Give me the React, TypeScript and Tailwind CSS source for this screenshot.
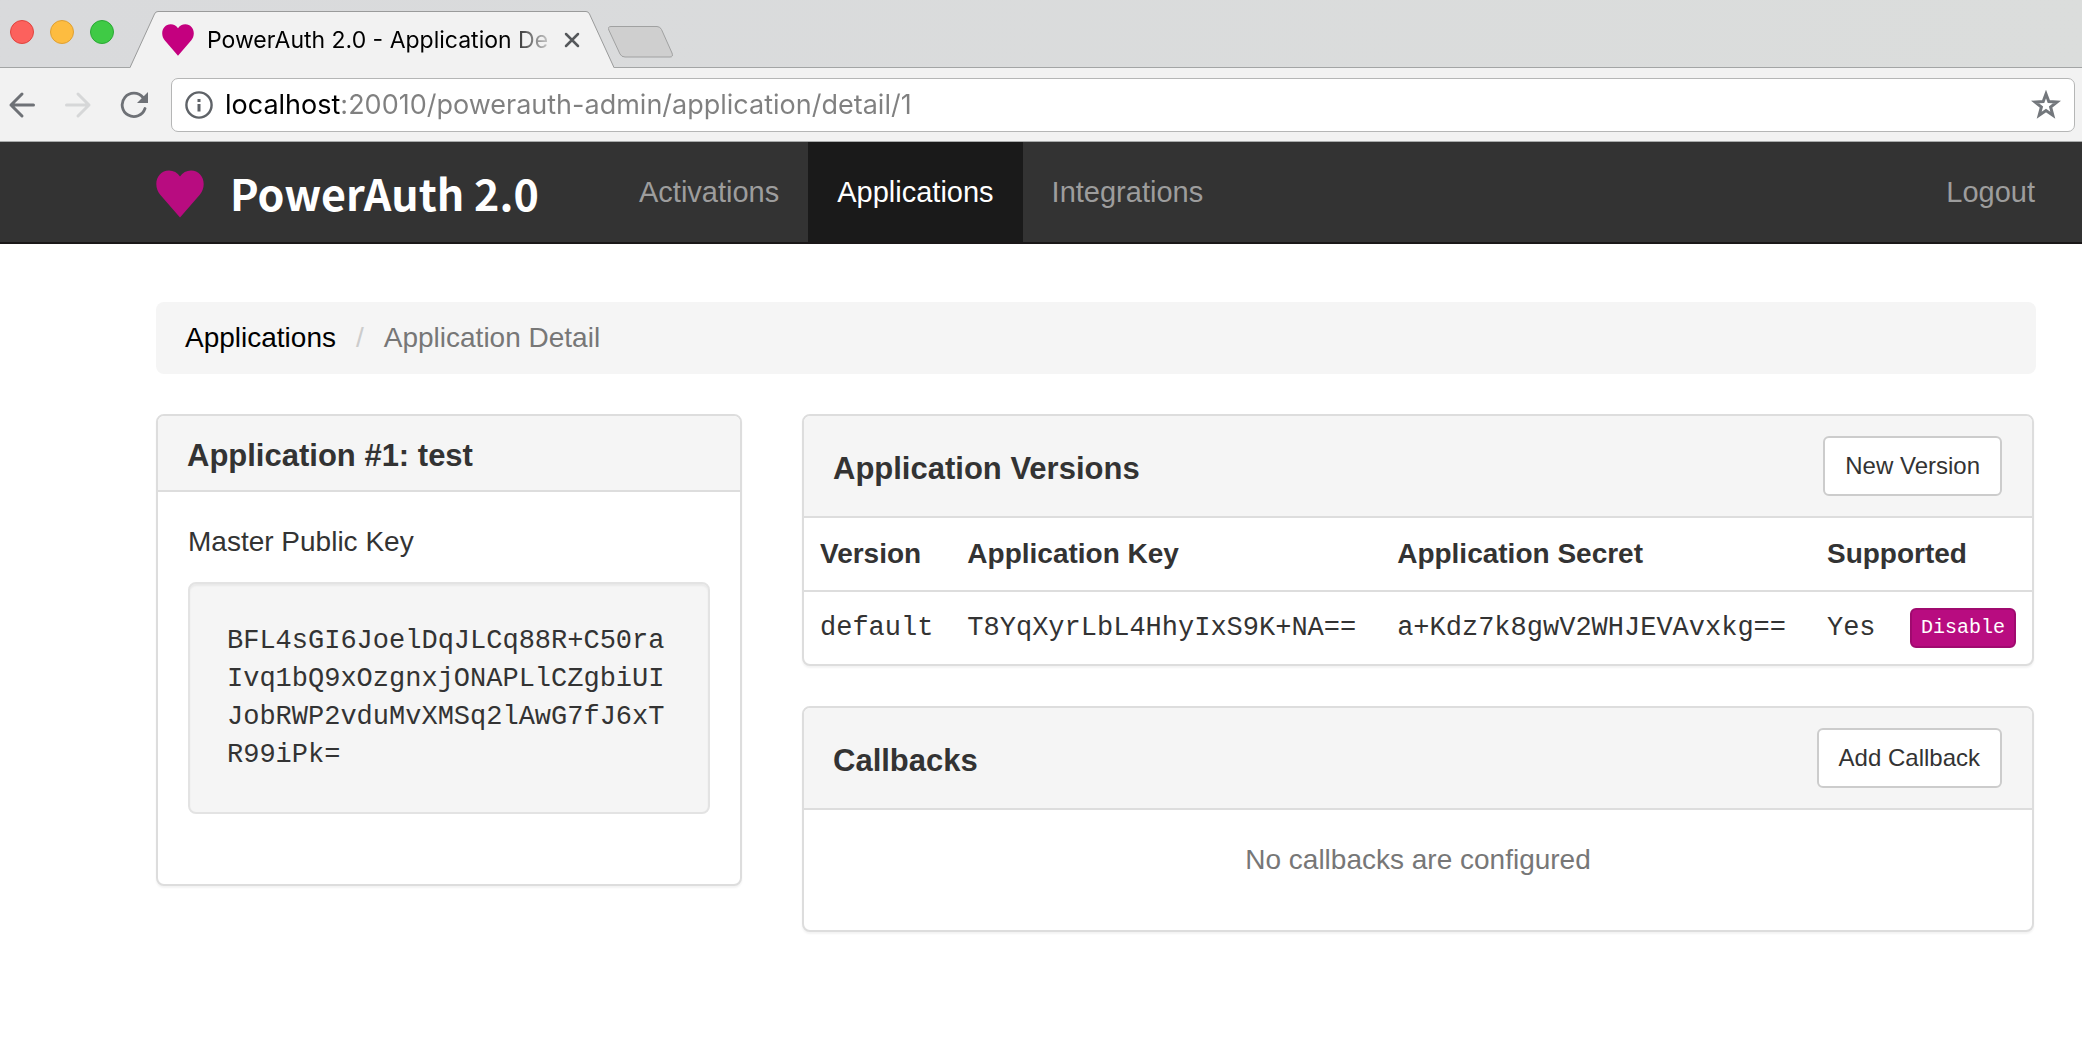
import type { ReactNode } from "react";

function Heart({ className, color }: { className: string; color: string }) {
  return (
    <svg viewBox="0 0 48 48" className={className} aria-hidden="true">
      <path
        d="M24 6.500C21.500 2.500 17.500 .5 13 .5C5.500 .5 .3 6.500 .3 14C.3 18.500 1.800 21.500 4 24.500L24 47.500L44 24.500C46.200 21.500 47.700 18.500 47.700 14C47.700 6.500 42.500 .5 35 .5C30.500 .5 26.500 2.500 24 6.500Z"
        fill={color}
      />
    </svg>
  );
}

function BrowserChrome() {
  return (
    <header className="font-[Inter,sans-serif]">
      <div className="flex h-[68px] items-end border-b border-[#a3a5a5] bg-gradient-to-r from-[#d9dadc] to-[#dbdddc]">
        <div className="flex gap-4 self-center pb-1 pl-[10px]">
          <span className="size-6 rounded-full border border-[#e0443e] bg-[#fc615d]" />
          <span className="size-6 rounded-full border border-[#dea034] bg-[#fdbc40]" />
          <span className="size-6 rounded-full border border-[#2aa935] bg-[#3fca45]" />
        </div>
        <div className="relative -mb-px ml-4 h-[57px] w-[484px]">
          <svg viewBox="0 0 484 57" className="absolute inset-0 size-full" aria-hidden="true">
            <path d="M0 57L24.500 3Q25.500 .5 28 .5H456Q458.500 .5 459.500 3L484 57Z" fill="#f2f2f2" />
            <path d="M0 56.500L24.500 3Q25.500 .5 28 .5H456Q458.500 .5 459.500 3L484 56.500" fill="none" stroke="#9a9b9b" />
          </svg>
          <div className="relative flex h-full items-center pl-8 pr-8">
            <Heart className="size-8 shrink-0" color="#c4007f" />
            <span className="ml-[13px] flex-1 whitespace-nowrap text-[23px] leading-8 text-black [mask-image:linear-gradient(to_right,#000_300px,transparent_350px)]">
              PowerAuth 2.0 - Application De
            </span>
            <button type="button" aria-label="Close tab" className="flex size-5 items-center justify-center">
              <svg viewBox="0 0 16 16" className="size-4" aria-hidden="true">
                <path d="M2 2L14 14M14 2L2 14" stroke="#55585b" strokeWidth="2.500" strokeLinecap="round" />
              </svg>
            </button>
          </div>
        </div>
        <button type="button" aria-label="New tab" className="-ml-1.5 mb-[9px]">
          <svg viewBox="0 0 66 32" className="h-8 w-[66px]" aria-hidden="true">
            <path d="M3 .5H49Q52 .5 53.500 3.500L64 27Q65.500 31 62 31H17Q13.500 31 12 28L.8 4Q-.5 .5 3 .5Z" fill="#cfcfcf" stroke="#a0a1a1" />
          </svg>
        </button>
      </div>
      <div className="flex h-[74px] items-center border-b border-[#a9abab] bg-[#f2f2f2] pr-[7px]">
        <div className="flex w-[171px] items-center gap-7 pl-2">
          <button type="button" aria-label="Back">
            <svg viewBox="0 0 28 28" className="size-7" fill="none" stroke="#6e7176" strokeWidth="3" strokeLinecap="round" strokeLinejoin="round" aria-hidden="true">
              <path d="M25.500 14H3M14 3L3 14L14 25" />
            </svg>
          </button>
          <button type="button" aria-label="Forward">
            <svg viewBox="0 0 28 28" className="size-7" fill="none" stroke="#d6d7d8" strokeWidth="3" strokeLinecap="round" strokeLinejoin="round" aria-hidden="true">
              <path d="M2.500 14H25M14 3L25 14L14 25" />
            </svg>
          </button>
          <button type="button" aria-label="Reload">
            <svg viewBox="0 0 28 28" className="size-7" fill="none" aria-hidden="true">
              <path d="M23 6.500A11.700 11.700 0 1 0 25 17.500" stroke="#6e7176" strokeWidth="2.800" strokeLinecap="round" />
              <path d="M28 1V12H17Z" fill="#6e7176" />
            </svg>
          </button>
        </div>
        <div className="flex h-[54px] flex-1 items-center rounded-[7px] border border-[#b5b6b6] bg-white px-[13px]">
          <svg viewBox="0 0 28 28" className="size-7 shrink-0" aria-hidden="true">
            <circle cx="14" cy="14" r="12.600" fill="none" stroke="#5f6368" strokeWidth="2.400" />
            <path d="M12.500 8H15.500V11H12.500ZM12.500 13H15.500V20.500H12.500Z" fill="#5f6368" />
          </svg>
          <input
            type="text"
            aria-label="Address"
            defaultValue="localhost:20010/powerauth-admin/application/detail/1"
            className="ml-3 min-w-0 flex-1 bg-[linear-gradient(to_right,#000_116px,#808080_116px)] bg-clip-text text-[27px] leading-10 text-transparent outline-none"
          />
          <button type="button" aria-label="Bookmark this page">
            <svg viewBox="0 0 30 30" className="size-[30px]" aria-hidden="true">
              <path d="M15 4L17.800 11.600L26 12L19.600 17L21.800 25.200L15 20.600L8.200 25.200L10.400 17L4 12L12.200 11.600Z" fill="none" stroke="#73777c" strokeWidth="3" />
            </svg>
          </button>
        </div>
      </div>
    </header>
  );
}

function Navbar() {
  return (
    <nav className="flex h-[102px] items-stretch border-b-2 border-[#1a1718] bg-[#333333] pl-[156px] pr-[47px] text-[29px] text-[#9d9d9d]">
      <a href="#" className="flex w-[454px] items-center text-white">
        <Heart className="mt-1 size-12" color="#b80c80" />
        <span className="ml-[26px] whitespace-nowrap font-['Noto_Sans_CJK_JP',sans-serif] text-[43px] font-bold leading-none">PowerAuth 2.0</span>
      </a>
      <a href="#" className="flex items-center px-[29px]">Activations</a>
      <a href="#" aria-current="page" className="flex items-center bg-[#1a1a1a] px-[29px] text-white">Applications</a>
      <a href="#" className="flex items-center px-[29px]">Integrations</a>
      <a href="#" className="ml-auto flex items-center">Logout</a>
    </nav>
  );
}

function Panel({ title, action, children }: { title: string; action?: string; children: ReactNode }) {
  return (
    <section className="overflow-hidden rounded-lg border-2 border-[#dddddd] bg-white shadow-[0_2px_2px_rgba(0,0,0,0.05)]">
      <div
        className={
          action
            ? "flex items-center justify-between border-b-2 border-[#dddddd] bg-[#f5f5f5] py-5 pl-[29px] pr-[30px]"
            : "border-b-2 border-[#dddddd] bg-[#f5f5f5] px-[29px] pb-[14px] pt-5"
        }
      >
        <h2 className={action ? "pt-1.5 text-[31px] font-bold leading-10" : "text-[31px] font-bold leading-10"}>{title}</h2>
        {action && (
          <button type="button" className="h-[60px] rounded-md border-2 border-[#cccccc] bg-white px-5 text-[24px]">
            {action}
          </button>
        )}
      </div>
      {children}
    </section>
  );
}

const versions = [
  { name: "default", key: "T8YqXyrLbL4HhyIxS9K+NA==", secret: "a+Kdz7k8gwV2WHJEVAvxkg==", supported: "Yes" },
];

export default function App() {
  return (
    <div className="min-h-screen bg-white font-['Liberation_Sans',sans-serif] text-[28px] leading-10 text-[#333333]">
      <BrowserChrome />
      <Navbar />
      <main className="pb-24 pl-[156px] pr-[46px] pt-[58px]">
        <ol className="flex gap-5 rounded-lg bg-[#f5f5f5] px-[29px] py-4">
          <li><a href="#" className="text-black">Applications</a></li>
          <li aria-hidden="true" className="text-[#cccccc]">/</li>
          <li className="text-[#777777]">Application Detail</li>
        </ol>
        <div className="mt-10 grid grid-cols-[586fr_1232fr] items-start gap-[60px] pr-0.5">
          <Panel title="Application #1: test">
            <div className="px-[30px] pb-[70px] pt-[30px]">
              <p>Master Public Key</p>
              <pre className="mt-5 whitespace-pre-wrap break-all rounded-lg border-2 border-[#e3e3e3] bg-[#f5f5f5] px-[37px] py-[38px] font-['Liberation_Mono',monospace] text-[27px] leading-[38px] shadow-[inset_0_2px_2px_rgba(0,0,0,0.05)]">
                BFL4sGI6JoelDqJLCq88R+C50raIvq1bQ9xOzgnxjONAPLlCZgbiUIJobRWP2vduMvXMSq2lAwG7fJ6xTR99iPk=
              </pre>
            </div>
          </Panel>
          <div className="flex flex-col gap-10">
            <Panel title="Application Versions" action="New Version">
              <table className="w-full table-fixed">
                <thead>
                  <tr className="h-[73px] border-b-2 border-[#dddddd] text-left">
                    <th className="w-[12%] px-4">Version</th>
                    <th className="w-[35%] px-4">Application Key</th>
                    <th className="w-[35%] px-4">Application Secret</th>
                    <th className="w-[18%] px-4">Supported</th>
                  </tr>
                </thead>
                <tbody className="font-['Liberation_Mono',monospace] text-[27px]">
                  {versions.map((v) => (
                    <tr key={v.name} className="h-[73px]">
                      <td className="whitespace-nowrap px-4">{v.name}</td>
                      <td className="px-4">{v.key}</td>
                      <td className="px-4">{v.secret}</td>
                      <td className="px-4">
                        <div className="flex items-center justify-between">
                          {v.supported}
                          <button type="button" className="h-10 rounded-md border-2 border-[#a00a6f] bg-[#b80c80] px-[9px] text-[20px] leading-none text-white">
                            Disable
                          </button>
                        </div>
                      </td>
                    </tr>
                  ))}
                </tbody>
              </table>
            </Panel>
            <Panel title="Callbacks" action="Add Callback">
              <p className="pb-[50px] pt-[30px] text-center text-[#777777]">No callbacks are configured</p>
            </Panel>
          </div>
        </div>
      </main>
    </div>
  );
}
